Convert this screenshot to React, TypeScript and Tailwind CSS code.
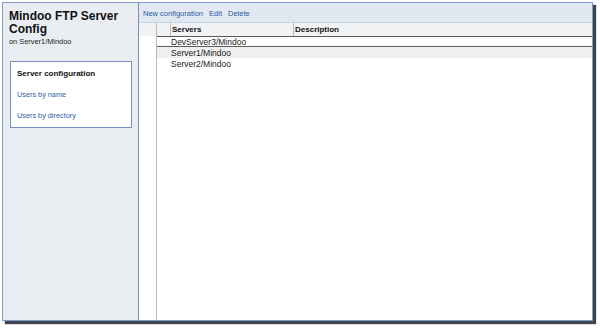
import React from "react";

export default function App() {
  const font = { fontFamily: '"Liberation Sans", Arial, sans-serif' };
  return (
    <div className="w-[600px] h-[328px] bg-white pt-[2px] pl-[2px]" style={font}>
      <div className="w-[591px] h-[319px] border border-[#7f9cc2] shadow-[3px_3px_1px_#3d4450] flex bg-white">
        {/* Sidebar */}
        <div className="w-[136px] h-full bg-[#e9edf2] border-r border-[#6f92c0] pl-[6px] pt-[7px] flex flex-col">
          <div className="text-[12px] leading-[13px] font-bold text-[#111] w-[120px]">
            Mindoo FTP Server Config
          </div>
          <div className="text-[7.4px] leading-[10px] text-[#222] mt-[1px]">on Server1/Mindoo</div>
          <div className="mt-[14px] ml-[1px] w-[122px] h-[67px] bg-white border border-[#6f92c0] pl-[6px] pt-[1px] flex flex-col">
            <div className="h-[21px] flex items-center text-[8px] font-bold text-[#111]">Server configuration</div>
            <div className="h-[21px] flex items-center pt-[1px] text-[7.3px] text-[#2f62a6]">Users by name</div>
            <div className="h-[21px] flex items-center pt-[1px] text-[7.3px] text-[#2f62a6]">Users by directory</div>
          </div>
        </div>
        {/* Main */}
        <div className="flex-1 h-full flex flex-col">
          <div className="h-[20px] bg-[#e2e8f1] border-b border-[#c6d3e5] flex items-center pt-[2px] pl-[4px] gap-[6px] text-[7.5px] text-[#2a5d9f]">
            <span>New configuration</span>
            <span>Edit</span>
            <span>Delete</span>
          </div>
          <div className="h-[13px] bg-[#f1f2f4] flex text-[8px] font-bold text-[#111]">
            <div className="w-[18px] border-r border-[#b9b9b9]" />
            <div className="w-[14px] border-r border-[#b9b9b9]" />
            <div className="w-[123px] border-r border-[#b9b9b9] pl-[1px] pt-[1px] flex items-center">Servers</div>
            <div className="flex-1 pl-[1px] pt-[1px] flex items-center">Description</div>
          </div>
          <div className="flex-1 flex">
            <div className="w-[18px] border-r border-[#b9b9b9]" />
            <div className="flex-1 flex flex-col text-[8.5px] text-[#222]">
              <div className="h-[11px] border-y border-[#5a5a5a] pl-[14px] pt-[1px] flex items-center">DevServer3/Mindoo</div>
              <div className="h-[11px] bg-[#efefef] pl-[14px] pt-[1px] flex items-center">Server1/Mindoo</div>
              <div className="h-[11px] pl-[14px] pt-[1px] flex items-center">Server2/Mindoo</div>
            </div>
          </div>
        </div>
      </div>
    </div>
  );
}
